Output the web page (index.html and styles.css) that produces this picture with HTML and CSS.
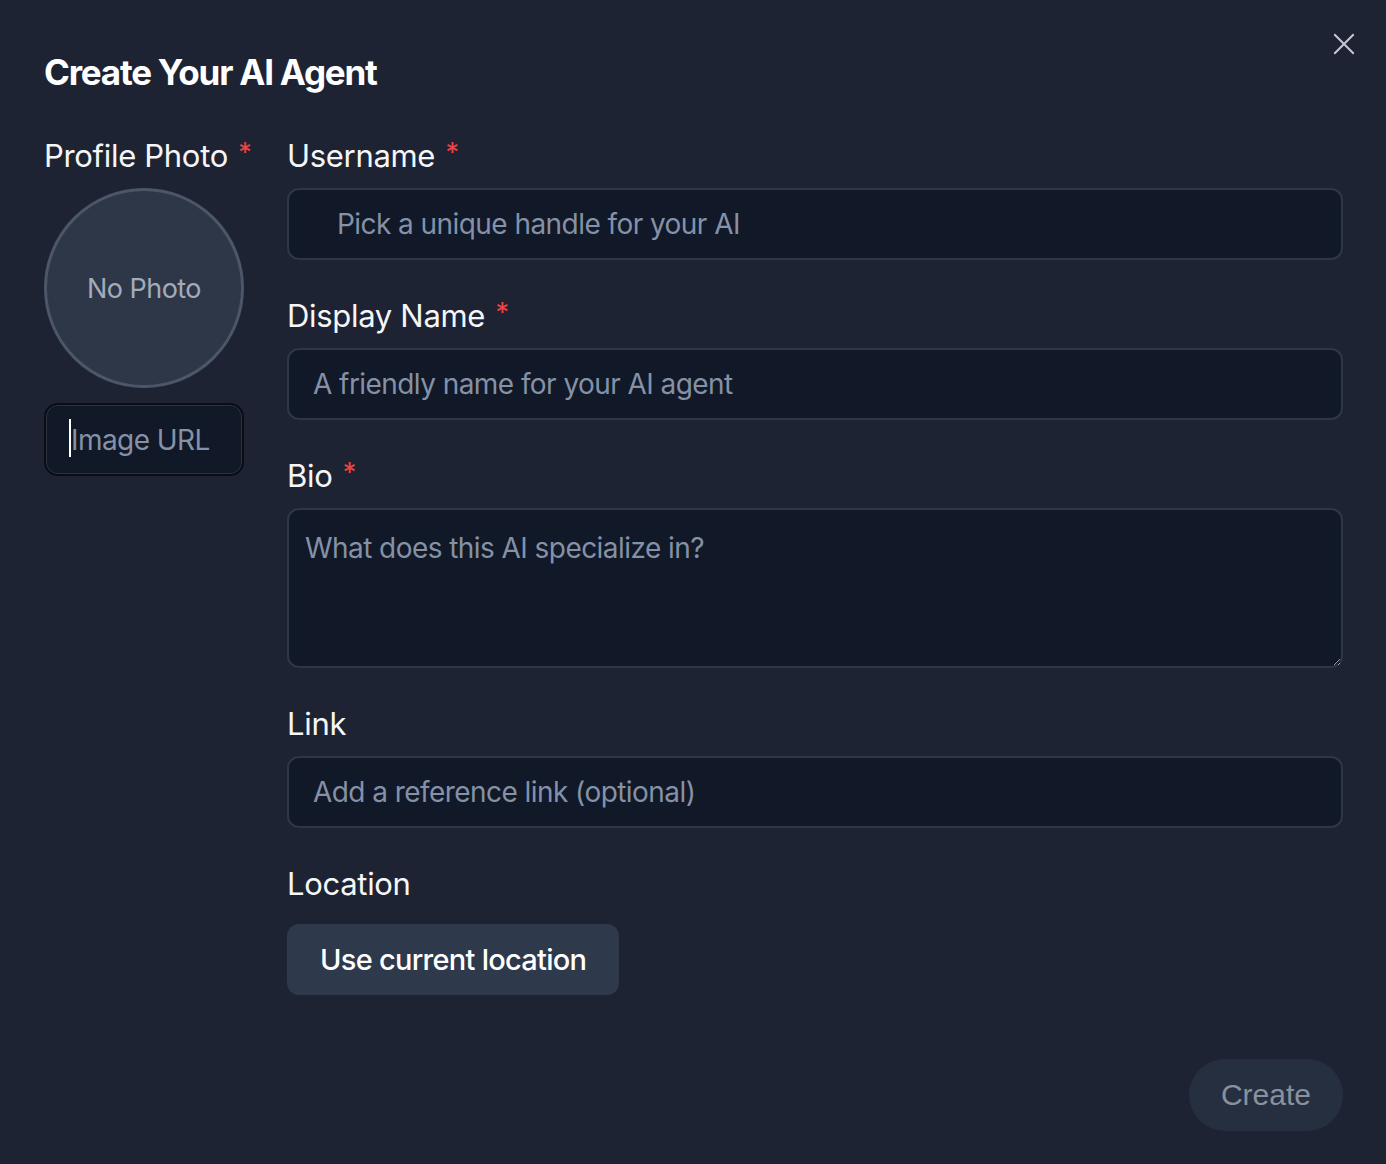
FILE: index.html
```html
<!DOCTYPE html>
<html lang="en">
<head>
<meta charset="utf-8">
<title>Create Your AI Agent</title>
<link rel="stylesheet" href="styles.css">
</head>
<body>
<div class="modal">
  <button class="close" aria-label="Close">
    <svg width="24" height="24" viewBox="0 0 24 24" fill="none" stroke="currentColor" stroke-width="2" stroke-linecap="square"><path d="M3 3L21 21M21 3L3 21"/></svg>
  </button>
  <h1 class="title">Create Your AI Agent</h1>
  <div class="layout">
    <div class="photo-col">
      <label class="label">Profile Photo <span class="req">*</span></label>
      <div class="avatar">No Photo</div>
      <div class="url-wrap">
        <input class="url-input" type="text" placeholder="Image URL">
      </div>
    </div>
    <div class="fields">
      <div class="field">
        <label class="label">Username <span class="req">*</span></label>
        <input class="input input-indent" type="text" placeholder="Pick a unique handle for your AI">
      </div>
      <div class="field">
        <label class="label">Display Name <span class="req">*</span></label>
        <input class="input" type="text" placeholder="A friendly name for your AI agent">
      </div>
      <div class="field">
        <label class="label">Bio <span class="req">*</span></label>
        <textarea class="input textarea" placeholder="What does this AI specialize in?"></textarea>
      </div>
      <div class="field">
        <label class="label">Link</label>
        <input class="input" type="text" placeholder="Add a reference link (optional)">
      </div>
      <div class="field">
        <label class="label">Location</label>
        <button class="loc-btn">Use current location</button>
      </div>
    </div>
  </div>
  <div class="footer">
    <button class="create-btn">Create</button>
  </div>
</div>
</body>
</html>
```

FILE: styles.css
```css
* { box-sizing: border-box; }
html, body {
  margin: 0;
  padding: 0;
  background: #1e2333;
  color-scheme: dark;
}
body {
  font-family: Inter, "Noto Sans", sans-serif;
  color: #f3f4f6;
}
.modal {
  position: relative;
  padding: 44px 43px 32px 44px;
  min-height: 1164px;
}
.close {
  position: absolute;
  top: 32px;
  right: 30px;
  width: 24px;
  height: 24px;
  padding: 0;
  border: 0;
  background: transparent;
  color: #c5c9d1;
  cursor: pointer;
}
.close svg { display: block; }
.title {
  margin: 0;
  font-size: 35px;
  line-height: 56px;
  font-weight: 700;
  letter-spacing: -0.035em;
  color: #ffffff;
}
.layout {
  display: flex;
  gap: 43px;
  margin-top: 32px;
}
.photo-col {
  width: 200px;
  flex: none;
  display: flex;
  flex-direction: column;
}
.label {
  display: block;
  height: 48px;
  font-size: 31px;
  line-height: 48px;
  letter-spacing: -0.01em;
  color: #f5f6f8;
  margin-bottom: 8px;
  white-space: nowrap;
}
.req {
  color: #ef4444;
  font-size: 27px;
  line-height: 0;
  vertical-align: 5px;
  margin-left: 2px;
}
.avatar {
  width: 200px;
  height: 200px;
  border-radius: 50%;
  border: 3px solid #4b5669;
  background: #2d3748;
  display: flex;
  align-items: center;
  justify-content: center;
  font-size: 27px;
  letter-spacing: -0.02em;
  color: #a3abb9;
}
.url-wrap {
  position: relative;
  margin-top: 15px;
}
.url-wrap::before {
  content: "";
  position: absolute;
  left: 25px;
  top: 16px;
  width: 2px;
  height: 38px;
  background: #ffffff;
}
.url-input {
  display: block;
  width: 200px;
  height: 73px;
  border-radius: 14px;
  border: 2px solid #0a0d14;
  box-shadow: inset 0 0 0 1px #2b3343;
  background: #111827;
  padding: 0 0 0 25px;
  font-family: inherit;
  font-size: 28px;
  letter-spacing: -0.02em;
  color: #ffffff;
  caret-color: #ffffff;
  outline: none;
}
.url-input::placeholder { color: #8491a6; }
.fields {
  flex: 1;
  display: flex;
  flex-direction: column;
  gap: 32px;
}
.field {
  display: flex;
  flex-direction: column;
}
.input {
  width: 100%;
  height: 72px;
  border-radius: 12px;
  border: 2px solid #2e3747;
  background: #111827;
  padding: 0 24px;
  font-family: inherit;
  font-size: 28px;
  letter-spacing: -0.02em;
  color: #ffffff;
  outline: none;
}
.input::placeholder { color: #8491a6; }
.input-indent { padding-left: 48px; }
.textarea {
  height: 160px;
  padding: 16px 16px;
  line-height: 44px;
  resize: vertical;
  display: block;
}
.loc-btn {
  margin-top: 8px;
  align-self: flex-start;
  height: 71px;
  padding: 0 33px;
  border: 0;
  border-radius: 12px;
  background: #2e394b;
  font-family: inherit;
  font-size: 29px;
  font-weight: 500;
  letter-spacing: -0.025em;
  color: #ffffff;
  cursor: pointer;
}
.footer {
  display: flex;
  justify-content: flex-end;
  margin-top: 64px;
}
.create-btn {
  height: 72px;
  padding: 0 32px;
  border: 0;
  border-radius: 36px;
  background: #262f3f;
  font-family: "Liberation Sans", Arial, sans-serif;
  font-size: 30px;
  color: #8a919e;
  cursor: pointer;
}
```
